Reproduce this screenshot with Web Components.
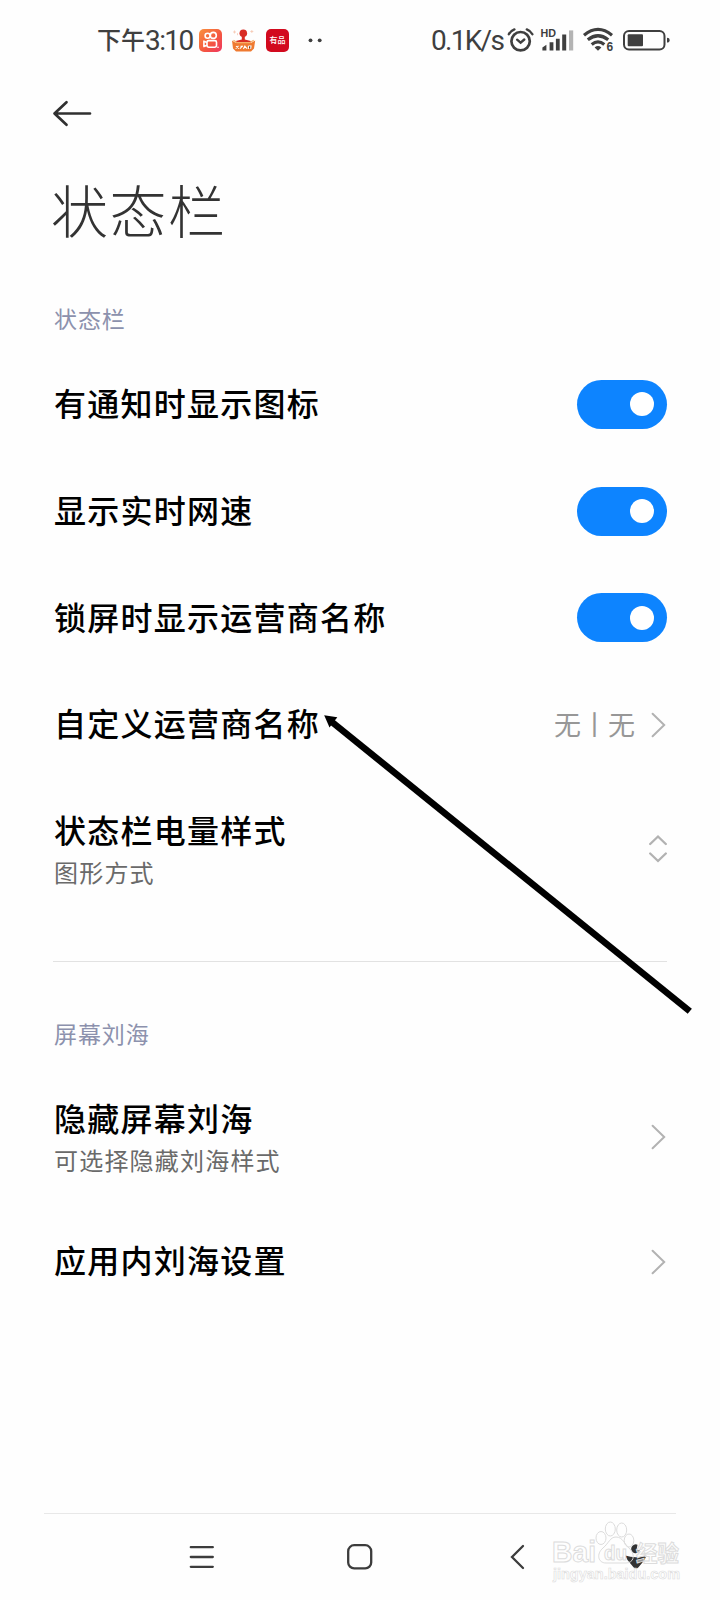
<!DOCTYPE html>
<html lang="zh-CN">
<head>
<meta charset="utf-8">
<title>状态栏</title>
<style>
  html, body {
    margin: 0;
    background: #fefefe;
  }
  body {
    width: 720px;
    height: 1600px;
    overflow: hidden;
    font-family: "Noto Sans CJK SC", sans-serif;
  }
</style>
</head>
<body>
<settings-page>
  <status-bar slot="status" time="3:10" speed="0.1K/s"></status-bar>
  <page-header slot="header">状态栏</page-header>

  <settings-group label="状态栏">
    <settings-row control="toggle">有通知时显示图标</settings-row>
    <settings-row control="toggle">显示实时网速</settings-row>
    <settings-row control="toggle">锁屏时显示运营商名称</settings-row>
    <settings-row control="chevron" value="无丨无">自定义运营商名称</settings-row>
    <settings-row control="updown" summary="图形方式">状态栏电量样式</settings-row>
  </settings-group>
  <settings-group label="屏幕刘海" divided>
    <settings-row control="chevron" summary="可选择隐藏刘海样式">隐藏屏幕刘海</settings-row>
    <settings-row control="chevron">应用内刘海设置</settings-row>
  </settings-group>

  <nav-bar slot="nav"></nav-bar>
  <pointer-arrow slot="overlay"></pointer-arrow>
  <site-watermark slot="overlay"></site-watermark>
</settings-page>

<script>
class SettingsPage extends HTMLElement {
  constructor() {
    super();
    this.attachShadow({ mode: "open" });
    this.shadowRoot.innerHTML = `
<style>
:host {
  position: relative;
  display: flex;
  flex-direction: column;
  width: 720px;
  height: 1600px;
}
main {
  flex: 1;
  padding: 0 53px 0 54px;
}
</style>
<slot name="status"></slot>
<slot name="header"></slot>
<main><slot></slot></main>
<slot name="nav"></slot>
<slot name="overlay"></slot>
`;
  }
}

class StatusBar extends HTMLElement {
  constructor() {
    super();
    this.attachShadow({ mode: "open" });
  }

  connectedCallback() {
    this.shadowRoot.innerHTML = `
<style>
:host {
  box-sizing: border-box;
  display: flex;
  align-items: center;
  justify-content: space-between;
  height: 80px;
  padding: 0 50px 0 97px;
  color: #3f3f3f;
}
div {
  display: flex;
  align-items: center;
}
svg {
  display: block;
  flex: none;
  overflow: visible;
}
.time {
  display: flex;
  align-items: center;
  width: 102px;
  font-size: 24px;
  font-weight: 500;
  line-height: 36px;
  white-space: nowrap;
}
.cjk { padding-bottom: 2px; }
.latin {
  font-family: Roboto, sans-serif;
  font-weight: 400;
  font-size: 28px;
  letter-spacing: -1.6px;
  padding-top: 1px;
}
.speed {
  width: 76px;
  line-height: 36px;
  letter-spacing: -1.7px;
  white-space: nowrap;
}
.app { margin-right: 9px; }
.badge {
  display: grid;
  place-items: center;
  width: 23px;
  height: 23px;
  margin-left: 1px;
  border-radius: 5px;
  background: #d20a1e;
  color: #fff;
  font-size: 8px;
  font-weight: 500;
  line-height: 10px;
  white-space: nowrap;
}
</style>
<div>
  <span class="time"><span class="cjk">下午</span><span class="latin">${this.getAttribute("time")}</span></span>
  <svg class="app" width="23" height="23" viewBox="0 0 23 23">
    <defs><linearGradient id="k" x1="0" y1="0" x2="1" y2="1">
      <stop offset="0" stop-color="#f9923f"/><stop offset=".55" stop-color="#f4593f"/><stop offset="1" stop-color="#ef3561"/>
    </linearGradient></defs>
    <rect width="23" height="23" rx="5" fill="url(#k)"/>
    <g fill="none" stroke="#fff" stroke-width="1.6" stroke-linejoin="round">
      <circle cx="8.6" cy="6.7" r="2.5"/><circle cx="14.3" cy="6.4" r="3"/>
      <rect x="8" y="11.6" width="9.5" height="6.6" rx="1.6"/>
      <path d="M8 13.6 4.9 12.2V17.6L8 16.2"/>
    </g>
    <circle cx="19" cy="18.3" r=".8" fill="#fff"/>
  </svg>
  <svg class="app" width="25" height="25" viewBox="0 0 25 25">
    <circle cx="12.3" cy="5.2" r="3.8" fill="#d82c24"/>
    <path d="M10.8 8h3v3.5l6 1.5v4H4.8v-4l6-1.5z" fill="#d82c24"/>
    <path d="M1 12.5 5 15H20L24.2 12.5 23 20.5 20 23.5H5L2 20.5z" fill="#ef7a31"/>
    <path d="M2.5 12.2 6 14.6H19L22.7 12.2" fill="none" stroke="#f6b06b" stroke-width="1.2"/>
    <path d="M4.7 20.6 7.5 17.9M5 18.1 8 20.7M9 20.7 11.5 17.9M9.5 18.2H12M14 17.6 12.5 20.9M14 18.4 16 20.7M17.4 17.9V21M17.4 18H20L19.6 20.9" stroke="#fff" stroke-width="1.1"/>
    <path d="M3.5 2.5v3M2 4h3M20.8 2v3M19.3 3.5h3M6.5 5.2v2" stroke="#f6c7b0" stroke-width=".8"/>
  </svg>
  <span class="badge">有品</span>
  <svg width="36" height="23" viewBox="0 0 36 23">
    <circle cx="21.5" cy="11.3" r="1.9" fill="#3f3f3f"/><circle cx="30.7" cy="11.3" r="1.9" fill="#3f3f3f"/>
  </svg>
</div>
<div>
  <span class="latin speed">${this.getAttribute("speed")}</span>
  <svg width="29" height="26" viewBox="0 0 29 26" fill="none" stroke="#3f3f3f" stroke-linecap="round">
    <circle cx="13.6" cy="14.2" r="9.2" stroke-width="2.7"/>
    <path d="M10.1 12.7 13.6 15.6 17.3 12.5" stroke-width="2.4"/>
    <path d="M1.8 7.2Q3.6 3.9 7.4 2.4M25.4 7.2Q23.6 3.9 19.8 2.4" stroke-width="2.4"/>
  </svg>
  <svg width="37" height="26" viewBox="0 0 37 26">
    <text x="4.6" y="10" font-family="Liberation Sans, sans-serif" font-size="10.5" font-weight="700" fill="#3f3f3f" textLength="15.5" lengthAdjust="spacingAndGlyphs">HD</text>
    <path d="M6.4 20.5 10.4 17.8V23.5H6.4zM13.6 15.2h3.8v8.3h-3.8zM19.9 11.7h3.8v11.8h-3.8zM26.2 7.4h4v16.1h-4z" fill="#3f3f3f"/>
    <path d="M33 3.4h4.2v20.1H33z" fill="#b4b4b4"/>
  </svg>
  <svg width="50" height="26" viewBox="0 0 50 26">
    <g fill="none" stroke="#3f3f3f" stroke-width="3.2">
      <path d="M11 8.2Q25 -3.3 39 8.2"/>
      <path d="M14.8 12.8Q25 4.7 35.2 12.8"/>
      <path d="M18.7 17.5Q25 12.2 31.3 17.5"/>
    </g>
    <path d="M21.6 20.4Q25 17.8 28.4 20.4L25 23.8z" fill="#3f3f3f"/>
    <text x="33.6" y="24.4" font-family="Liberation Sans, sans-serif" font-size="12" font-weight="700" fill="#3f3f3f" stroke="#fefefe" stroke-width="1.5" paint-order="stroke">6</text>
  </svg>
  <svg width="47" height="26" viewBox="0 0 47 26">
    <rect x="1" y="3.9" width="40.5" height="18.6" rx="5" fill="none" stroke="#3f3f3f" stroke-width="2"/>
    <rect x="4.7" y="7.2" width="15.3" height="12" rx="1" fill="#3f3f3f"/>
    <path d="M44 10.8q2.6 0 2.6 2.4t-2.6 2.4z" fill="#3f3f3f"/>
  </svg>
</div>
`;
  }
}

class PageHeader extends HTMLElement {
  constructor() {
    super();
    this.attachShadow({ mode: "open" });
    this.shadowRoot.innerHTML = `
<style>
:host {
  box-sizing: border-box;
  display: block;
  height: 226px;
  padding: 20px 52px 0;
}
svg { display: block; }
h1 {
  margin: 38px 0 0 -1px;
  font-size: 57px;
  font-weight: 300;
  line-height: 84px;
  letter-spacing: 1.5px;
  color: #333;
}
</style>
<svg width="40" height="28" viewBox="0 0 40 28" fill="none" stroke="#303030" stroke-width="2.7" stroke-linecap="round" stroke-linejoin="round">
  <path d="M14.5 2.2 2.5 13.5 14.5 24.8M2.5 13.5H38"/>
</svg>
<h1><slot></slot></h1>
`;
  }
}

class SettingsGroup extends HTMLElement {
  constructor() {
    super();
    this.attachShadow({ mode: "open" });
  }

  connectedCallback() {
    this.shadowRoot.innerHTML = `
<style>
:host { display: block; }
:host([divided]) {
  margin: 41px 0 0 -1px;
  padding-left: 1px;
  border-top: 1px solid #e2e2e2;
}
:host([divided]) h2 { margin-top: 41px; }
h2 {
  margin: -18.5px 0 0;
  padding-bottom: 2.6px;
  font-size: 23px;
  font-weight: 400;
  line-height: 61px;
  letter-spacing: 0.9px;
  color: #8c91ad;
}
</style>
<h2>${this.getAttribute("label")}</h2>
<slot></slot>
`;
  }
}

class SettingsRow extends HTMLElement {
  controls = {
    toggle: `<toggle-switch></toggle-switch>`,
    chevron: `<svg width="16" height="26" viewBox="0 0 16 26"><path d="M1.6 1.7 13.2 13 1.6 24.3"/></svg>`,
    updown: `<svg width="18" height="30" viewBox="0 0 18 30"><path d="M1.2 10 9 2.5 16.8 10M1.2 19.5 9 27 16.8 19.5" stroke-width="2.3"/></svg>`,
  };

  constructor() {
    super();
    this.attachShadow({ mode: "open" });
  }

  connectedCallback() {
    const summary = this.getAttribute("summary");
    const value = this.getAttribute("value");
    this.shadowRoot.innerHTML = `
<style>
:host {
  display: flex;
  align-items: center;
  justify-content: space-between;
  height: 106.7px;
  white-space: nowrap;
}
:host([summary]) { height: 142px; }
.label { padding-bottom: 2.6px; }
.title {
  padding-bottom: 2px;
  font-size: 32px;
  font-weight: 500;
  line-height: 46px;
  letter-spacing: 1.25px;
  color: #000;
}
.summary {
  font-size: 24px;
  line-height: 36px;
  letter-spacing: 1.2px;
  color: #6a6a6a;
}
.end {
  display: flex;
  align-items: center;
  gap: 16px;
}
.value {
  padding-bottom: 2px;
  font-size: 27px;
  line-height: 40px;
  color: #979797;
}
svg {
  display: block;
  fill: none;
  stroke: #b2b2b2;
  stroke-width: 2;
  stroke-linecap: round;
}
</style>
<div class="label">
  <div class="title"><slot></slot></div>
  ${summary ? `<div class="summary">${summary}</div>` : ""}
</div>
<div class="end">
  ${value ? `<span class="value">${value}</span>` : ""}
  ${this.controls[this.getAttribute("control")]}
</div>
`;
  }
}

class ToggleSwitch extends HTMLElement {
  constructor() {
    super();
    this.attachShadow({ mode: "open" });
    this.shadowRoot.innerHTML = `
<style>
:host {
  box-sizing: border-box;
  display: flex;
  align-items: center;
  justify-content: flex-end;
  width: 90px;
  height: 49px;
  padding-right: 13px;
  border-radius: 25px;
  background: #0d84ff;
}
span {
  width: 24px;
  height: 24px;
  border-radius: 50%;
  background: #fff;
}
</style>
<span></span>
`;
  }
}

class NavBar extends HTMLElement {
  constructor() {
    super();
    this.attachShadow({ mode: "open" });
    this.shadowRoot.innerHTML = `
<style>
:host {
  display: grid;
  grid-template-columns: repeat(3, 158px) 78px;
  justify-content: start;
  justify-items: center;
  align-items: center;
  height: 86px;
  margin: 0 44px;
  padding-left: 79px;
  border-top: 1px solid #e8e8e8;
}
svg {
  display: block;
  fill: none;
  stroke: #3c3c3c;
  stroke-width: 2.3;
  stroke-linecap: round;
}
</style>
<svg width="28" height="28" viewBox="0 0 28 28"><path d="M2.8 4.2H24.8M2.8 14H24.8M2.8 23.8H24.8"/></svg>
<svg width="28" height="28" viewBox="0 0 28 28"><rect x="2.2" y="2.2" width="23" height="23.2" rx="6"/></svg>
<svg width="28" height="28" viewBox="0 0 28 28"><path d="M19 3 8 14 19 25"/></svg>
<svg width="28" height="28" viewBox="0 0 28 28">
  <path d="M15.5 1.7A4.5 4.5 0 1 0 18 7.2L14.6 6.4z" fill="#333" stroke="none"/>
  <path d="M3.3 12.5Q13.5 16 24.5 12.5L22.5 17 16.5 24.2Q14 26.6 11.5 24.2L5.5 17z" fill="#333" stroke="none"/>
</svg>
`;
  }
}

class PointerArrow extends HTMLElement {
  constructor() {
    super();
    this.attachShadow({ mode: "open" });
    this.shadowRoot.innerHTML = `
<style>
:host {
  position: absolute;
  left: 320px;
  top: 710px;
}
svg { display: block; }
</style>
<svg width="380" height="310" viewBox="320 710 380 310">
  <path d="M331 721.3 689.8 1011.2" stroke="#000" stroke-width="6.6"/>
  <path d="M324.2 715.3 337.3 717.2 329.5 727.5z"/>
</svg>
`;
  }
}

class SiteWatermark extends HTMLElement {
  constructor() {
    super();
    this.attachShadow({ mode: "open" });
    this.shadowRoot.innerHTML = `
<style>
:host {
  position: absolute;
  left: 550px;
  top: 1518px;
}
svg { display: block; }
text {
  font-family: "Liberation Sans", "Noto Sans CJK SC", sans-serif;
  font-weight: 700;
}
</style>
<svg width="136" height="70" viewBox="550 1518 136 70" fill="#fefefe" fill-opacity=".5" stroke="#dcdcdc" stroke-width="1">
  <g fill="none">
    <ellipse cx="601" cy="1538" rx="5" ry="6.5"/>
    <ellipse cx="610.3" cy="1529" rx="5" ry="7"/>
    <ellipse cx="621.7" cy="1530" rx="5" ry="7"/>
    <ellipse cx="629" cy="1540.5" rx="4.8" ry="6.5"/>
    <path d="M616 1537C610 1537 609 1543 603 1548C596 1554 598 1563 606 1563H626C633 1563 636 1556 630 1549C624 1544 623 1537 616 1537Z"/>
  </g>
  <text x="552" y="1562" font-size="29" textLength="44" lengthAdjust="spacingAndGlyphs">Bai</text>
  <text x="604" y="1560" font-size="20" textLength="23" lengthAdjust="spacingAndGlyphs">du</text>
  <text x="636" y="1561" font-size="22" textLength="43" lengthAdjust="spacingAndGlyphs">经验</text>
  <text x="553" y="1579" font-size="15" stroke-width=".6" textLength="127" lengthAdjust="spacingAndGlyphs">jingyan.baidu.com</text>
</svg>
`;
  }
}

customElements.define("settings-page", SettingsPage);
customElements.define("status-bar", StatusBar);
customElements.define("page-header", PageHeader);
customElements.define("settings-group", SettingsGroup);
customElements.define("toggle-switch", ToggleSwitch);
customElements.define("settings-row", SettingsRow);
customElements.define("nav-bar", NavBar);
customElements.define("pointer-arrow", PointerArrow);
customElements.define("site-watermark", SiteWatermark);
</script>
</body>
</html>
